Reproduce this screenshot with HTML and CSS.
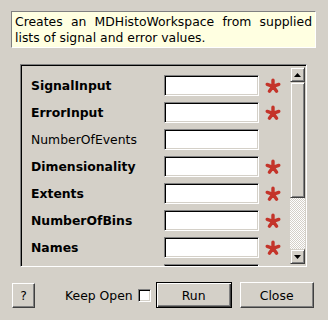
FILE: index.html
```html
<!DOCTYPE html>
<html>
<head>
<meta charset="utf-8">
<link rel="stylesheet" href="styles.css">
</head>
<body>
<div class="dialog">
  <div class="desc">Creates an MDHistoWorkspace from supplied lists of signal and error values.</div>
  <div class="frame">
    <div class="rows">
      <div class="row"><span class="lbl b">SignalInput</span><span class="inp"></span><svg class="req" viewBox="0 0 16 16"><g stroke="#c4342a" stroke-width="3.4" stroke-linecap="round"><path d="M8 8.3V2.2M8 8.3L13.8 6.4M8 8.3L11.6 13.2M8 8.3L4.4 13.2M8 8.3L2.2 6.4"/></g></svg></div>
      <div class="row"><span class="lbl b">ErrorInput</span><span class="inp"></span><svg class="req" viewBox="0 0 16 16"><g stroke="#c4342a" stroke-width="3.4" stroke-linecap="round"><path d="M8 8.3V2.2M8 8.3L13.8 6.4M8 8.3L11.6 13.2M8 8.3L4.4 13.2M8 8.3L2.2 6.4"/></g></svg></div>
      <div class="row"><span class="lbl">NumberOfEvents</span><span class="inp"></span></div>
      <div class="row"><span class="lbl b">Dimensionality</span><span class="inp"></span><svg class="req" viewBox="0 0 16 16"><g stroke="#c4342a" stroke-width="3.4" stroke-linecap="round"><path d="M8 8.3V2.2M8 8.3L13.8 6.4M8 8.3L11.6 13.2M8 8.3L4.4 13.2M8 8.3L2.2 6.4"/></g></svg></div>
      <div class="row"><span class="lbl b">Extents</span><span class="inp"></span><svg class="req" viewBox="0 0 16 16"><g stroke="#c4342a" stroke-width="3.4" stroke-linecap="round"><path d="M8 8.3V2.2M8 8.3L13.8 6.4M8 8.3L11.6 13.2M8 8.3L4.4 13.2M8 8.3L2.2 6.4"/></g></svg></div>
      <div class="row"><span class="lbl b">NumberOfBins</span><span class="inp"></span><svg class="req" viewBox="0 0 16 16"><g stroke="#c4342a" stroke-width="3.4" stroke-linecap="round"><path d="M8 8.3V2.2M8 8.3L13.8 6.4M8 8.3L11.6 13.2M8 8.3L4.4 13.2M8 8.3L2.2 6.4"/></g></svg></div>
      <div class="row"><span class="lbl b">Names</span><span class="inp"></span><svg class="req" viewBox="0 0 16 16"><g stroke="#c4342a" stroke-width="3.4" stroke-linecap="round"><path d="M8 8.3V2.2M8 8.3L13.8 6.4M8 8.3L11.6 13.2M8 8.3L4.4 13.2M8 8.3L2.2 6.4"/></g></svg></div>
      <div class="row"><span class="lbl"></span><span class="inp"></span></div>
    </div>
    <div class="scrollbar">
      <div class="sb-btn"><svg viewBox="0 0 7 4" class="arrow"><polygon points="0,4 7,4 3.5,0" fill="#000"/></svg></div>
      <div class="sb-handle"></div>
      <div class="sb-trough"></div>
      <div class="sb-btn sb-down"><svg viewBox="0 0 7 4" class="arrow"><polygon points="0,0 7,0 3.5,4" fill="#000"/></svg></div>
    </div>
  </div>
  <div class="buttons">
    <div class="btn help">?</div>
    <span class="keep">Keep Open</span>
    <span class="check"></span>
    <div class="btn run">Run</div>
    <div class="btn close">Close</div>
  </div>
</div>
</body>
</html>
```

FILE: styles.css
```css
html, body {
  margin: 0;
  padding: 0;
}
body {
  background: #d4d0c8;
  font-family: "DejaVu Sans", sans-serif;
  font-size: 12.4px;
  color: #000;
  width: 328px;
  height: 320px;
  overflow: hidden;
}
.dialog {
  padding: 11px 12px 0 11px;
  display: flex;
  flex-direction: column;
}
.desc {
  height: 37px;
  box-sizing: border-box;
  border: 1px solid;
  border-color: #808080 #fff #fff #808080;
  background: #ffffe1;
  padding: 2px 3px 0 3px;
  line-height: 16px;
  text-align: justify;
}
.frame {
  margin: 16px 0 0 9px;
  width: 287px;
  height: 203px;
  box-sizing: border-box;
  border: 1px solid;
  border-color: #808080 #fff #fff #808080;
  box-shadow: inset 1px 1px 0 #000;
  display: flex;
}
.rows {
  flex: 1;
  overflow: hidden;
  padding: 10px 0 0 10px;
  display: flex;
  flex-direction: column;
  gap: 6px;
}
.row {
  display: flex;
  align-items: center;
  height: 21px;
  flex-shrink: 0;
}
.lbl {
  width: 133px;
  white-space: nowrap;
}
.b {
  font-weight: bold;
}
.inp {
  width: 95px;
  height: 21px;
  box-sizing: border-box;
  background: #fff;
  border: 1px solid;
  border-color: #808080 #fff #fff #808080;
  box-shadow: inset 1px 1px 0 #000, inset -1px -1px 0 #d4d0c8;
}
.req {
  margin-left: 6px;
  width: 16px;
  height: 16px;
}
.scrollbar {
  width: 15px;
  margin: 2px 1px 1px 0;
  display: flex;
  flex-direction: column;
}
.sb-btn {
  height: 15px;
  box-sizing: border-box;
  border: 1px solid;
  border-color: #d4d0c8 #404040 #404040 #d4d0c8;
  box-shadow: inset 1px 1px 0 #fff, inset -1px -1px 0 #808080;
  display: flex;
  align-items: center;
  justify-content: center;
}
.arrow {
  width: 7px;
  height: 4px;
}
.sb-handle {
  height: 116px;
  box-sizing: border-box;
  border: 1px solid;
  border-color: #d4d0c8 #404040 #404040 #d4d0c8;
  box-shadow: inset 1px 1px 0 #fff, inset -1px -1px 0 #808080;
  background: #d4d0c8;
}
.sb-trough {
  height: 51px;
  background-image: repeating-conic-gradient(#fff 0 25%, #d4d0c8 0 50%);
  background-size: 2px 2px;
}
.buttons {
  margin-top: 15px;
  display: flex;
  align-items: center;
}
.btn {
  box-sizing: border-box;
  display: flex;
  align-items: center;
  justify-content: center;
  border: 1px solid;
  border-color: #fff #404040 #404040 #fff;
  box-shadow: inset -1px -1px 0 #808080;
  background: #d4d0c8;
}
.help {
  width: 23px;
  height: 25px;
  margin-left: 1px;
}
.keep {
  margin-left: 30px;
}
.check {
  width: 13px;
  height: 13px;
  box-sizing: border-box;
  margin-left: 5px;
  background: #fff;
  border: 1px solid;
  border-color: #808080 #fff #fff #808080;
  box-shadow: inset 1px 1px 0 #000, inset -1px -1px 0 #d4d0c8;
}
.run {
  width: 76px;
  height: 26px;
  margin-left: 5px;
  border-color: #000;
  box-shadow: inset 1px 1px 0 #fff, inset -1px -1px 0 #404040, inset -2px -2px 0 #808080;
}
.close {
  width: 74px;
  height: 26px;
  margin-left: 8px;
}
```
